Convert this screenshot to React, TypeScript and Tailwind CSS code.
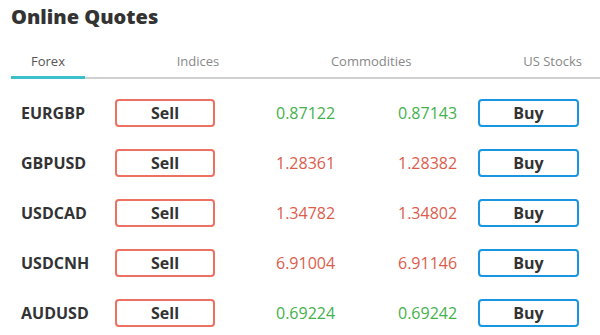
const TABS = ['Forex', 'Indices', 'Commodities', 'US Stocks'];

type Quote = { symbol: string; bid: string; ask: string; up: boolean };

const QUOTES: Quote[] = [
  { symbol: 'EURGBP', bid: '0.87122', ask: '0.87143', up: true },
  { symbol: 'GBPUSD', bid: '1.28361', ask: '1.28382', up: false },
  { symbol: 'USDCAD', bid: '1.34782', ask: '1.34802', up: false },
  { symbol: 'USDCNH', bid: '6.91004', ask: '6.91146', up: false },
  { symbol: 'AUDUSD', bid: '0.69224', ask: '0.69242', up: true },
];

function QuoteRow({ q }: { q: Quote }) {
  const priceColor = q.up ? 'text-[#43b14c]' : 'text-[#dc5c4c]';
  return (
    <div className="flex h-[50px] items-center pl-[10px]">
      <div className="w-[94px] text-[16px] font-bold text-[#333]">{q.symbol}</div>
      <button
        type="button"
        className="h-[28px] w-[100px] rounded-[4px] border-2 border-[#ec7162] bg-white text-[16px] font-bold text-[#333]"
      >
        Sell
      </button>
      <div className={`ml-[61px] w-[62px] text-[16px] ${priceColor}`}>{q.bid}</div>
      <div className={`ml-[60px] w-[80px] text-[16px] ${priceColor}`}>{q.ask}</div>
      <button
        type="button"
        className="h-[28px] w-[101px] rounded-[4px] border-2 border-[#1a95e0] bg-white text-[16px] font-bold text-[#333]"
      >
        Buy
      </button>
    </div>
  );
}

export default function App() {
  return (
    <div className="h-[335px] w-[600px] overflow-hidden bg-white font-['Open_Sans',sans-serif]">
      <div className="pl-[11px] pt-[3px]">
        <h1 className="text-[20px] font-extrabold leading-[28px] text-[#333]">Online Quotes</h1>

        {/* tabs */}
        <div className="mt-[20px] flex justify-between border-b-2 border-[#d0d0d0]">
          {TABS.map((tab, i) => (
            <div
              key={tab}
              className={`-mb-[2px] border-b-[3px] px-5 pb-[5px] text-[13px] leading-[20px] last:pr-[18px] ${
                i === 0 ? 'border-[#3bbfcd] text-[#555]' : 'border-transparent text-[#888]'
              }`}
            >
              {tab}
            </div>
          ))}
        </div>

        <div className="pt-[9px]">
          {QUOTES.map((q) => (
            <QuoteRow key={q.symbol} q={q} />
          ))}
        </div>
      </div>
    </div>
  );
}
